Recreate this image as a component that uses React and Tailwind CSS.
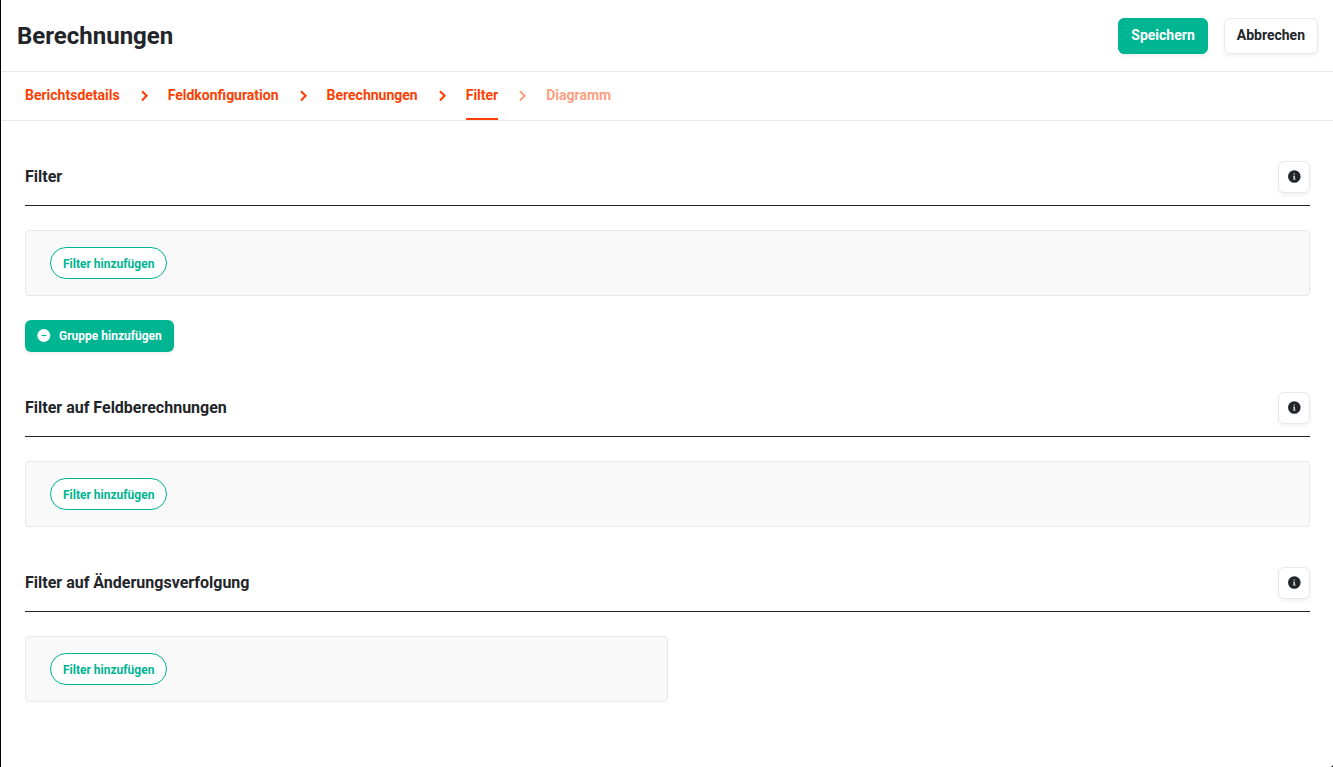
import React from "react";

const steps = [
  { label: "Berichtsdetails" },
  { label: "Feldkonfiguration" },
  { label: "Berechnungen" },
  { label: "Filter", current: true },
  { label: "Diagramm", upcoming: true },
];

function ChevronIcon() {
  return (
    <svg className="size-4" viewBox="0 0 16 16" fill="none" stroke="currentColor" strokeWidth="2.1" aria-hidden="true">
      <path d="M6 3.2 10.6 7.8 6 12.4" />
    </svg>
  );
}

function InfoIcon() {
  return (
    <svg className="size-4" viewBox="0 0 16 16" aria-hidden="true">
      <circle cx="8.3" cy="7.5" r="6.3" fill="#222529" />
      <path d="M7.6 4.4H9v1.2H7.6zM7 6.7h2v3h.8v.9H6.8v-.9h.8v-2.1H7z" fill="#fff" opacity="0.85" />
    </svg>
  );
}

function PlusCircleIcon() {
  return (
    <svg className="size-3.5" viewBox="0 0 14 14" aria-hidden="true">
      <circle cx="6.8" cy="6.5" r="6.5" fill="#fff" />
      <path d="M4.5 6.5h5" stroke="#00b592" strokeWidth="1" />
      <path d="M7 4.5v4" stroke="#00b592" strokeWidth="1" opacity="0.3" />
    </svg>
  );
}

function Section({ title, half, children }) {
  return (
    <section className="pt-10">
      <div className="flex items-center justify-between border-b border-[#222529] pb-3">
        <h2 className="text-base font-bold">{title}</h2>
        <button
          type="button"
          aria-label={"Info: " + title}
          className="flex size-8 items-center justify-center rounded-md border border-[#e9e9eb] bg-white shadow-[0_2px_4px_rgba(0,0,0,0.06)]"
        >
          <InfoIcon />
        </button>
      </div>
      <div className={(half ? "w-1/2" : "w-full") + " mt-6 rounded border border-[#e8e8ea] bg-[#f9f9f9] px-6 py-4"}>
        <button
          type="button"
          className="block h-8 rounded-full border border-[#00b592] bg-white px-3 pt-0.5 text-xs font-bold text-[#00b592]"
        >
          Filter hinzufügen
        </button>
      </div>
      {children}
    </section>
  );
}

export default function App() {
  return (
    <div className="min-h-screen border-l border-black bg-white font-['Roboto',sans-serif] text-[#222529]">
      <header className="flex h-18 items-center justify-between border-b border-[#e9e9e9] pr-[15px] pl-4">
        <h1 className="text-2xl font-bold">Berechnungen</h1>
        <div className="flex gap-4">
          <button
            type="button"
            className="h-9 rounded-md border border-[#00b592] bg-[#00b592] px-3 pb-0.5 text-sm font-bold text-white shadow-[0_2px_4px_rgba(0,0,0,0.06)]"
          >
            Speichern
          </button>
          <button
            type="button"
            className="h-9 rounded-md border border-[#e9e9eb] bg-white px-3 pb-0.5 text-sm font-bold shadow-[0_2px_4px_rgba(0,0,0,0.06)]"
          >
            Abbrechen
          </button>
        </div>
      </header>
      <nav className="border-b border-[#e9e9e9] px-6" aria-label="Schritte">
        <ol className="flex h-12 gap-4 text-sm font-bold text-[#fc3f03]">
          {steps.map((step, i) => (
            <li key={step.label} className={"flex gap-4 " + (step.upcoming ? "opacity-50" : "")}>
              {i > 0 && (
                <span className="flex items-center">
                  <ChevronIcon />
                </span>
              )}
              <a
                href="#"
                aria-current={step.current ? "step" : undefined}
                className={"flex items-center border-b-2 " + (step.current ? "border-[#fc3f03]" : "border-transparent")}
              >
                {step.label}
              </a>
            </li>
          ))}
        </ol>
      </nav>
      <main className="pr-[23px] pl-6">
        <Section title="Filter">
          <button
            type="button"
            className="mt-6 flex h-8 items-center gap-2 rounded-md bg-[#00b592] px-3 text-xs font-bold text-white shadow-[0_2px_4px_rgba(0,0,0,0.06)]"
          >
            <PlusCircleIcon />
            Gruppe hinzufügen
          </button>
        </Section>
        <Section title="Filter auf Feldberechnungen" />
        <Section title="Filter auf Änderungsverfolgung" half />
      </main>
      <svg className="fixed right-0 bottom-0 size-0.5" viewBox="0 0 2 2" aria-hidden="true">
        <path d="M2 0v2H0z" fill="#222529" />
      </svg>
    </div>
  );
}
